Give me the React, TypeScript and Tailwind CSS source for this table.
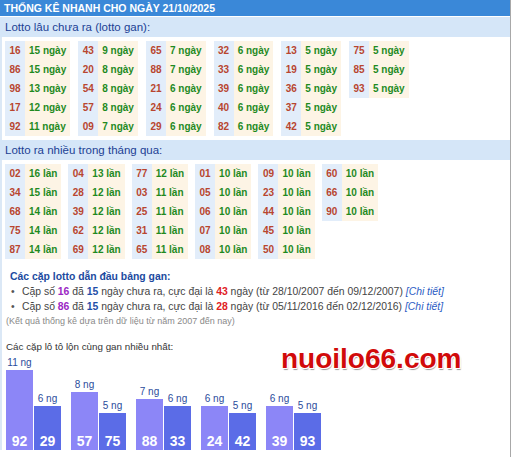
const FONT = { fontFamily: '"Liberation Sans", Arial, sans-serif' }

type Cell = [string, number]

const GAN: Cell[][] = [
  [['16', 15], ['86', 15], ['98', 13], ['17', 12], ['92', 11]],
  [['43', 9], ['20', 8], ['54', 8], ['57', 8], ['09', 7]],
  [['65', 7], ['88', 7], ['21', 6], ['24', 6], ['29', 6]],
  [['32', 6], ['33', 6], ['39', 6], ['40', 6], ['82', 6]],
  [['13', 5], ['19', 5], ['36', 5], ['37', 5], ['42', 5]],
  [['75', 5], ['85', 5], ['93', 5]],
]

const NHIEU: Cell[][] = [
  [['02', 16], ['34', 15], ['68', 14], ['75', 14], ['87', 14]],
  [['04', 13], ['28', 12], ['39', 12], ['62', 12], ['69', 12]],
  [['77', 12], ['03', 11], ['25', 11], ['31', 11], ['65', 11]],
  [['01', 10], ['05', 10], ['06', 10], ['07', 10], ['08', 10]],
  [['09', 10], ['23', 10], ['44', 10], ['45', 10], ['50', 10]],
  [['60', 10], ['66', 10], ['90', 10]],
]

// cặp lộn: [số, số ngày gan]
const PAIRS: Cell[][] = [
  [['92', 11], ['29', 6]],
  [['57', 8], ['75', 5]],
  [['88', 7], ['33', 6]],
  [['24', 6], ['42', 5]],
  [['39', 6], ['93', 5]],
]

function Group({ rows, unit }: { rows: Cell[]; unit: string }) {
  return (
    <div className="flex text-[10px] font-bold leading-[19px]">
      <div className="bg-[#e2edfa] w-[20px] text-center text-[#b8452f]">
        {rows.map(([n]) => (
          <div key={n} className="h-[19px]">{n}</div>
        ))}
      </div>
      <div className="bg-[#fdf4e5] px-[4px] text-[#1f8a1f]">
        {rows.map(([n, v]) => (
          <div key={n} className="h-[19px] whitespace-nowrap">{v} {unit}</div>
        ))}
      </div>
    </div>
  )
}

function SubHeader({ children }: { children: React.ReactNode }) {
  return (
    <div className="h-[20px] bg-[#d5e6f8] pl-[5px] text-[11.5px] leading-[20px] text-[#1c3f94]">
      {children}
    </div>
  )
}

function Bullet({ a, b, c, from, to }: { a: string; b: string; c: string; from: string; to: string }) {
  return (
    <div className="flex h-[15px] items-center leading-[15px]">
      <span className="w-[12px] pl-[1px] text-[#555]">•</span>
      <span className="whitespace-nowrap">
        Cặp số <b className="text-[#9b27c4]">{a}</b> đã <b className="text-[#1f4fa8]">{b}</b> ngày chưa ra, cực đại là{' '}
        <b className="text-[#e0201e]">{c}</b> ngày (từ {from} đến {to}){' '}
        <i className="text-[#2b5bc4]">[Chi tiết]</i>
      </span>
    </div>
  )
}

export default function App() {
  return (
    <div className="w-[511px] h-[457px] bg-white border-r border-[#a8a8a8] overflow-hidden" style={FONT}>
      <div className="h-[16px] bg-[#3a88d8] pl-[4px] text-[10.5px] font-bold leading-[16px] text-white">
        THỐNG KÊ NHANH CHO NGÀY 21/10/2025
      </div>
      <div className="mt-[1px]">
        <SubHeader>Lotto lâu chưa ra (lotto gan):</SubHeader>
      </div>
      <div className="border-l-2 border-[#dbe8f6]">
        <div className="flex items-start gap-2 pl-[3px] pt-[4px] pb-[4px]">
          {GAN.map((g, i) => (
            <Group key={i} rows={g} unit="ngày" />
          ))}
        </div>
      </div>
      <SubHeader>Lotto ra nhiều trong tháng qua:</SubHeader>
      <div className="border-l-2 border-[#dbe8f6]">
        <div className="flex items-start gap-[7px] pl-[3px] pt-[4px]">
          {NHIEU.map((g, i) => (
            <Group key={i} rows={g} unit="lần" />
          ))}
        </div>

        <div className="pl-[8px] pt-[10px]">
          <div className="text-[10.4px] font-bold leading-[15px] text-[#1c4aa0]">Các cặp lotto dẫn đầu bảng gan:</div>
          <div className="text-[10.4px] text-[#444]">
            <Bullet a="16" b="15" c="43" from="28/10/2007" to="09/12/2007" />
            <Bullet a="86" b="15" c="28" from="05/11/2016" to="02/12/2016" />
          </div>
        </div>
        <div className="pl-[4px] text-[9px] leading-[15px] text-[#8a8a8a]">
          (Kết quả thống kê dựa trên dữ liệu từ năm 2007 đến nay)
        </div>

        <div className="relative mt-[10px] pl-[4px]">
          <div className="text-[9.8px] leading-[15px] text-[#333]">Các cặp lô tô lộn cùng gan nhiều nhất:</div>
          <div className="absolute left-[279px] top-[6px] text-[28px] font-bold leading-[28px] text-[#d10a0a] [text-shadow:-1px_-1px_0_#fff,1px_-1px_0_#fff,-1px_1px_0_#fff,1px_1px_0_#fff,1px_2px_1px_#9a9a9a]">
            nuoilo66.com
          </div>
          <div className="flex h-[96px] items-end gap-[10px]">
            {PAIRS.map((p, i) => (
              <div key={i} className="flex items-end gap-[1px]">
                {p.map(([n, d], j) => (
                  <div key={n} className="flex w-[27px] flex-col items-center">
                    <div className="mb-[1px] text-[10px] leading-[12px] text-[#2b4c9c]">{d} ng</div>
                    <div
                      className={`flex w-full items-end justify-center pb-[1px] text-[14px] font-bold leading-[16px] text-white ${j === 0 ? 'bg-[#8c86f7]' : 'bg-[#5b6ce7]'}`}
                      style={{ height: Math.round(d * 7.3) }}
                    >
                      {n}
                    </div>
                  </div>
                ))}
              </div>
            ))}
          </div>
        </div>
      </div>
    </div>
  )
}
